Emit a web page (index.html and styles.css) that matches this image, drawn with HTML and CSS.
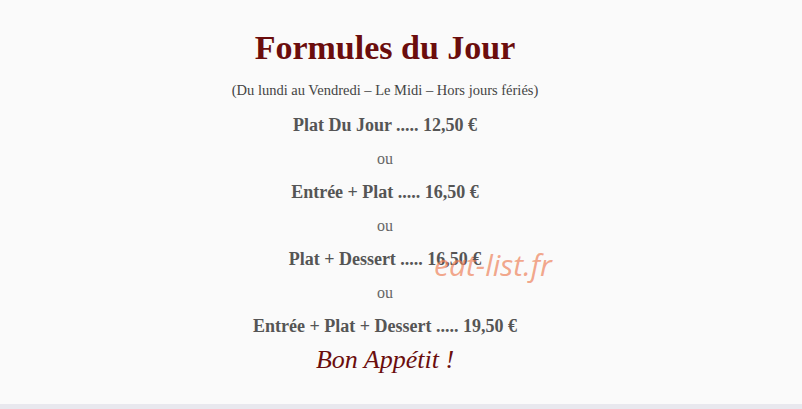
FILE: index.html
```html
<!DOCTYPE html>
<html lang="fr">
<head>
    <meta charset="UTF-8">
    <meta name="viewport" content="width=device-width, initial-scale=1.0">
    <title>Formules du Jour</title>
    <link rel="stylesheet" href="styles.css">
</head>
<body>
    <div class="menu-container">
        <h1 class="menu-title">Formules du Jour</h1>
        <p class="menu-note">(Du lundi au Vendredi – Le Midi – Hors jours fériés)</p>

        <p class="menu-item">Plat Du Jour ..... 12,50 €</p>
        <p class="menu-or">ou</p>
        <p class="menu-item">Entrée + Plat ..... 16,50 €</p>
        <p class="menu-or">ou</p>
        <p class="menu-item">Plat + Dessert ..... 16,50 €</p>
        <p class="menu-or">ou</p>
        <p class="menu-item">Entrée + Plat + Dessert ..... 19,50 €</p>

        <p class="menu-bye">Bon Appétit !</p>

        <!-- site watermark -->
        <span class="watermark">eat-list.fr</span>
    </div>
    <div class="bottom-bar"></div>
</body>
</html>
```

FILE: styles.css
```css
body {
    margin: 0;
    background-color: #fafafa;
    font-family: "Liberation Serif", "DejaVu Serif", serif;
    color: #555;
    overflow: hidden;
}

.menu-container {
    position: relative;
    width: 770px;
    height: 404px;
    text-align: center;
    padding-top: 28px;
    box-sizing: border-box;
}

.menu-title {
    margin: 0;
    font-size: 34px;
    line-height: 40px;
    font-weight: bold;
    color: #6b0d0d;
}

.menu-note {
    margin: 13px 0 10px;
    font-size: 14.5px;
    line-height: 18px;
    color: #444;
}

.menu-item {
    margin: 0;
    font-size: 18px;
    line-height: 33px;
    font-weight: bold;
    color: #555;
}

.menu-or {
    margin: 0;
    font-size: 16px;
    line-height: 34px;
    color: #666;
}

.menu-bye {
    margin: 0;
    font-size: 26px;
    line-height: 34px;
    font-style: italic;
    color: #6b0d0d;
}

.watermark {
    position: absolute;
    left: 434px;
    top: 244px;
    font-family: "Open Sans", sans-serif;
    font-style: italic;
    font-size: 30px;
    color: rgba(238, 130, 90, 0.7);
}

.bottom-bar {
    height: 5px;
    background-color: #e8e8ee;
}
```
